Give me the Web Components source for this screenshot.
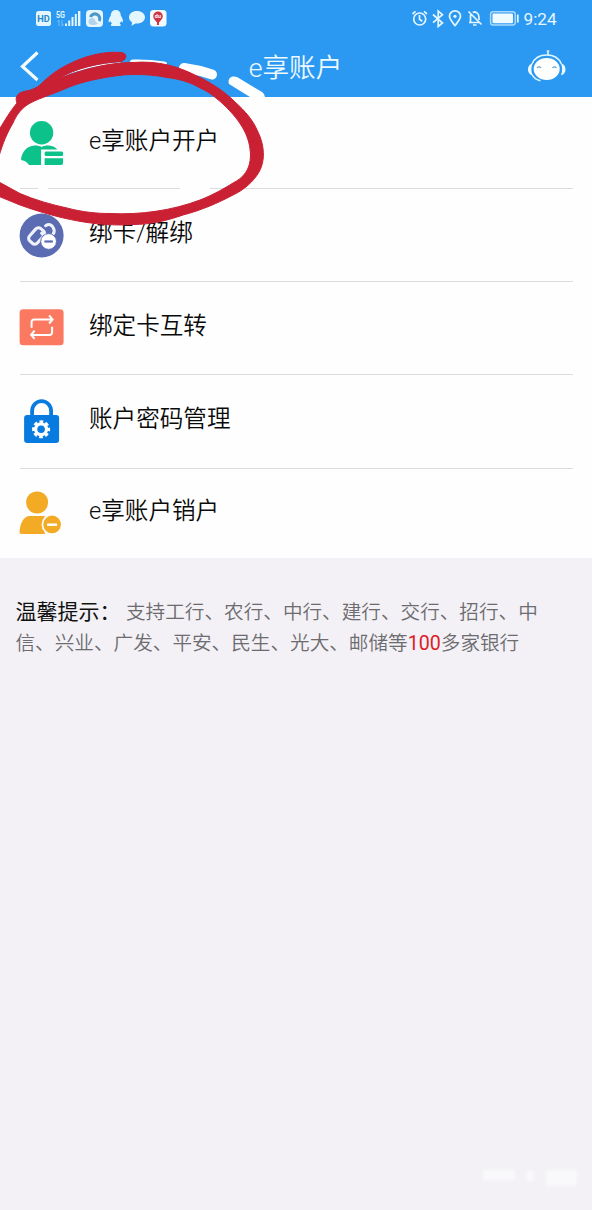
<!DOCTYPE html>
<html lang="zh-CN">
<head>
<meta charset="utf-8">
<title>e享账户</title>
<style>
html,body{margin:0;padding:0;background:#f3f1f5}
body{font-family:Roboto,"Noto Sans CJK SC",sans-serif}
</style>
</head>
<body>
<account-page></account-page>
<script>
const define = (name, html) => customElements.define(name, class extends HTMLElement {
  constructor() {
    super();
    const t = document.createElement('template');
    t.innerHTML = html;
    this.attachShadow({mode: 'open'}).append(t.content.cloneNode(true));
  }
});

define('status-bar', `
<style>
:host{display:flex;justify-content:space-between;height:37px;padding:0 34.500px 0 35px;color:#e4f6ff;box-sizing:border-box}
svg{display:block;flex:none}
.right{display:flex}
.time{font-size:17.2px;line-height:38px;width:34px;margin-left:3.500px;white-space:nowrap}
</style>
<svg width="134" height="37" viewBox="35 0 134 37" fill="#e4f6ff">
  <rect x="36" y="11" width="15" height="15" rx="2.5"/>
  <text x="37.3" y="22.2" font-size="9.3" font-weight="700" fill="#2888c8" textLength="12.5" lengthAdjust="spacingAndGlyphs">HD</text>
  <text x="56" y="18" font-size="8.5" font-weight="700" textLength="9" lengthAdjust="spacingAndGlyphs">5G</text>
  <path d="M59 20v6M57.5 22l1.5-2M62 20v6l1.5-2" fill="none" stroke="#73bff8"/>
  <path d="M65 23.500h2V26h-2zM68.200 20.500h2V26h-2zM71.500 17h2v9h-2zM74.800 14h2v12h-2zM78 11h2.400v15H78z"/>
  <rect x="86" y="10" width="17" height="17" rx="4"/>
  <path d="M90.500 17a4.800 4.800 0 1 1 8.700 4" fill="none" stroke="#4d98c4" stroke-width="3"/>
  <path d="M88.500 22c0-3.500 3-5 5-3.500 2 0 1 4 4.500 4.500-1 1.500-3 2-5 2-3 0-4.500-1-4.500-3z" fill="#b4d5e9"/>
  <path d="M115.800 10c-3.400 0-5 2.500-5 5.500-1.700 2.800-2.500 5-2.100 6.500.5.700 1.300-.3 1.800-1 .2 1.300.8 2 1.500 2.600-1.700.9-1.500 2.400.2 2.400h7.200c1.700 0 1.900-1.500.2-2.400.7-.6 1.300-1.300 1.500-2.600.5.700 1.300 1.700 1.800 1 .4-1.500-.4-3.700-2.100-6.500 0-3-1.600-5.500-5-5.500z"/>
  <path d="M137 11c4.500 0 8 2.700 8 6.300s-3.500 6.300-8 6.300l-1.500-.1-4 2.200.6-3.300c-1.900-1.200-3.100-3-3.100-5.100 0-3.600 3.500-6.300 8-6.300z"/>
  <rect x="150" y="10" width="16.500" height="16.500" rx="3.500" fill="#f5fbff"/>
  <path d="M158 11.500a4.800 4.800 0 0 1 4.800 4.800c0 2.700-2.200 4-3.800 6.200V25h-2v-2.500c-1.600-2.200-3.800-3.500-3.800-6.200a4.800 4.800 0 0 1 4.800-4.800z" fill="#ce3440"/>
  <text x="154.800" y="18" font-size="5.500" font-weight="700" fill="#fff">du</text>
</svg>
<div class="right">
<svg width="109" height="37" viewBox="411 0 109 37" fill="none" stroke="#e4f6ff" stroke-width="1.700">
  <circle cx="419.700" cy="19" r="6"/><path d="M419.500 15v4.200l2.800 2M412.500 14l3-2.600M427 14l-3-2.600"/>
  <path d="M433 14.500l9.500 8.500-4.300 3.500V11l4.300 3.700-9.500 8"/>
  <path d="M455 25.600c-3.200-4.300-5.500-6.500-5.500-9.300a5.500 5.500 0 0 1 11 0c0 2.800-2.300 5-5.500 9.300z"/><circle cx="455" cy="16.300" r="1.600" fill="#e4f6ff" stroke="none"/>
  <path d="M468.500 11.500l13 13M469 22.500h11M470.500 22v-6c0-.7.200-1.200.5-1.700M472.700 12.600c3.200-1.600 6.300.8 6.300 4.400v3M474.700 11v1M473 25h3.500"/>
  <rect x="490.600" y="11.800" width="24.600" height="13.200" rx="2.500" stroke="#a9dafc" stroke-width="1.500"/><rect x="492.500" y="13.500" width="20.500" height="9.800" rx="1" fill="#f0fbff" stroke="none"/><path d="M517.800 14.500v8" stroke-width="1.800"/>
</svg>
<div class="time">9:24</div></div>`);

define('title-bar', `
<style>
:host{display:grid;grid-template-columns:48px 1fr 48px;align-items:center;height:60px;box-sizing:border-box;color:#eefaff;padding:0 21px 0 10px}
svg{display:block}
h1{margin:0;text-align:center;font-size:26.600px;font-weight:350;line-height:62px;height:60px;padding-left:10px;white-space:nowrap}
</style>
<svg width="48" height="60" viewBox="10 37 48 60"><path d="M37.500 52.500L22.500 66.500 37.500 80" fill="none" stroke="#f4fcff" stroke-width="3.200"/></svg>
<h1><slot></slot></h1>
<svg width="48" height="60" viewBox="523 37 48 60"><g fill="none" stroke="#dff5ff" stroke-width="1.600">
  <path d="M532 64c2.500-6 8-9 14.700-9s12.200 3 14.700 9M548 55v-3M532 74.500c1.700 3.300 4.500 5.500 8.500 6.300"/></g>
  <circle cx="548" cy="51.500" r="1.400" fill="#bfe4fb"/>
  <path d="M532.500 63.500c-3 .5-4.500 3-4.500 6s2 5.500 4.500 5.800c-1.500-4-1.500-8 0-11.800zM561 63.500c3 .5 4.500 3 4.500 6s-2 5.500-4.500 5.800c1.500-4 1.500-8 0-11.800z" fill="#eefaff"/>
  <ellipse cx="546.700" cy="69" rx="13" ry="11" fill="#fff"/>
  <path d="M537 68c1-1.500 3-1.500 4 0M552.500 68c1-1.500 3-1.500 4 0" fill="none" stroke="#67a8d4" stroke-width="1.200"/>
</svg>`);

define('menu-row', `
<style>
:host{display:flex;height:93.200px;padding:0 19.500px;box-sizing:border-box}
.body{display:flex;flex:1;border-bottom:1.500px solid #dcdbdf;box-sizing:border-box}
:host([last]) .body{border-bottom:0}
:host([first]){height:92px}
:host([last]){height:89px}
.icon{width:69.500px;flex:none}
.label{font-size:23.600px;font-weight:350;line-height:34px;padding-top:26.500px;color:#0a0a0a;white-space:nowrap}
:host([last]) .label{padding-top:25.500px}
</style>
<div class="body"><div class="icon"><slot name="icon"></slot></div><div class="label"><slot></slot></div></div>`);

const icons = {
open: ['97', `<g fill="#0cc18a"><circle cx="41.500" cy="132.700" r="11.700"/><path d="M29 147c4-2 9-2 12.500 0 3.500-2 9-2 12.500 0 1.500.7 2.500 1.600 3 2.500H41V165H29c-1.500-2-3-3.300-4.500-4l-3.500-1c0-5 3.500-11.500 8-13z"/><rect x="44.500" y="151.500" width="18.500" height="4.500" rx="1.500"/><path d="M44.500 158.200H63v4.300a2.500 2.500 0 0 1-2.500 2.500h-16z"/></g>`],
bind: ['189', `<circle cx="41.500" cy="235.500" r="22" fill="#5b6cb3"/><g fill="none" stroke="#f0f2fb" stroke-width="3.100" stroke-linecap="round"><rect x="28.300" y="230.700" width="16.500" height="10.500" rx="3.500" transform="rotate(-48 36.500 236)"/><path d="M45.500 225.700c3.500-2.200 6-1.200 7.500 1.700 1.700 3 1.700 4.600 0 6.500M45 234.500c-2 .3-2.800-.2-3.500-1.300"/></g><circle cx="48.500" cy="241.500" r="7.900" fill="#fff" stroke="#5b6cb3" stroke-width="1"/><path d="M44.300 241.500h8.400" stroke="#5b6cb3" stroke-width="2.200"/>`],
swap: ['282.2', `<rect x="19.500" y="309.500" width="44" height="36" rx="3.500" fill="#fa7960"/><g fill="none" stroke="#fff" stroke-width="2"><path d="M31.500 328v-5.500c0-1.700 1-2.700 2.700-2.700H51M52 327v5.500c0 1.700-1 2.700-2.700 2.700H32M49 315.500l3.500 4.200-3.500 4M34.500 330.800l-3.500 4.200 3.500 4"/></g>`],
lock: ['375.4', `<path d="M32 417v-5.500a9.500 10 0 0 1 19 0v5.500" fill="none" stroke="#087be0" stroke-width="3.800"/><rect x="24" y="415.500" width="35" height="28" rx="3" fill="#087be0"/><circle cx="41" cy="429.700" r="5.400" fill="none" stroke="#fff" stroke-width="3.200"/><circle cx="41" cy="429.700" r="7.300" fill="none" stroke="#fff" stroke-width="3.400" stroke-dasharray="3.500 2.234" stroke-dashoffset="1.750"/>`],
close: ['468.6', `<g fill="#f3aa25"><circle cx="37" cy="502" r="11"/><path d="M28 515.500h17l-3 8 3 10H21.500c-1.800 0-2.300-.9-2-3 .7-7 3-13 8.500-15z"/><circle cx="52" cy="524" r="9.700" stroke="#fefefe" stroke-width="1.700"/></g><path d="M47 524.300h10" stroke="#fff" stroke-width="2.500"/>`]
};
customElements.define('row-icon', class extends HTMLElement {
  connectedCallback() {
    const [top, art] = icons[this.getAttribute('name')];
    this.attachShadow({mode:'open'}).innerHTML = `<style>:host,svg{display:block}svg{overflow:visible}</style><svg width="60" height="80" viewBox="19.900 ${top} 60 80">${art}</svg>`;
  }
});

define('hint-text', `
<style>
:host{display:block;padding:38.500px 15.500px 0;font-size:19.620px;font-weight:350;line-height:31px;color:#6c6b70;white-space:nowrap}
.line{height:31px;display:flex}
b{font-weight:400;color:#111;font-size:21px;width:110.500px}
em{font-style:normal;font-weight:400;color:#dc1d27}
</style>
<div class="line"><b>温馨提示：</b><span>支持工行、农行、中行、建行、交行、招行、中</span></div>
<div class="line"><span>信、兴业、广发、平安、民生、光大、邮储等<em>100</em>多家银行</span></div>`);

define('marker-ink', `
<style>:host{position:absolute;left:0;top:0;width:592px;height:240px;pointer-events:none}svg{display:block}</style>
<svg width="592" height="240" viewBox="0 0 592 240">
  <path d="M38 188h10M180 188h30" stroke="#fefefe" stroke-width="4"/>
  <g fill="none" stroke="#fff" stroke-linecap="round"><path d="M58 78C77 69 98 64 120 63" stroke-width="1.500"/><path d="M133 62.500q15-.5 31 2" stroke-width="6"/><path d="M184 68q15 2 28 6.500" stroke-width="10"/></g>
  <path d="M229 84c-2-6 3-9 8-7l25 15q3 2 3 5h-15z" fill="#fff"/>
  <path fill="#c92034" stroke="#c92034" stroke-width="1" d="M17 103C14 96 19 92 26 91C33 90 37 87 40 85C49 76 57 70 67 65C84 56 104 51 121 52.500C127 53 128 59 121 61.500C99 63 76 68 58 79C81 70 107 62.500 133 62.500C146 61.500 157 62.500 168 65C181 68 191 73 202 78.500C216 86 226 93 234 101C246 112 253 120 258 132C264.500 145 265.500 161 259 172C254 181 244 190 233 195C218 203 202 210 183 215C166 221 150 224.500 133 224.500C97 227 59 219 20 205L-2 196V181.500L20 193.500C35 200 51 204.500 67 208C82 212 96 213.500 110 213.500C141 215 172 210.500 200 200C213 195 225 188 233 183C243 178 250.500 170 250.500 155C250 138 243 123 223 104C213 95 207 91 200 88C190 82 179 79 167 77.500C155 75 144 74.500 133 74.500C122 74.500 111 76.500 100 78.500C87 81 76 84 67 88C51 95 36 99 27 105C20 110 16 116 13 123C7 133 3 143-1 156V130C5 120 11 110 17 103Z"/>
</svg>`);

define('faint-mark', `
<style>:host{position:absolute;left:480px;top:1166px;width:100px;height:26px;filter:blur(1.500px)}svg{display:block}</style>
<svg width="100" height="26"><g fill="#fff" opacity=".5"><rect x="3" y="4" width="32" height="10"/><rect x="46" y="5" width="8" height="10"/><rect x="66" y="4" width="31" height="16"/></g></svg>`);

define('account-page', `
<style>
:host{display:block;position:relative;width:592px;height:1210px;background:#f3f1f5;overflow:hidden}
header{background:#2b99f2}
main{background:#fefefe;height:461px}
</style>
<header><status-bar></status-bar><title-bar>e享账户</title-bar></header>
<main>
<menu-row first><row-icon slot="icon" name="open"></row-icon>e享账户开户</menu-row>
<menu-row><row-icon slot="icon" name="bind"></row-icon>绑卡/解绑</menu-row>
<menu-row><row-icon slot="icon" name="swap"></row-icon>绑定卡互转</menu-row>
<menu-row><row-icon slot="icon" name="lock"></row-icon>账户密码管理</menu-row>
<menu-row last><row-icon slot="icon" name="close"></row-icon>e享账户销户</menu-row>
</main>
<hint-text></hint-text>
<marker-ink></marker-ink>
<faint-mark></faint-mark>`);
</script>
</body>
</html>
